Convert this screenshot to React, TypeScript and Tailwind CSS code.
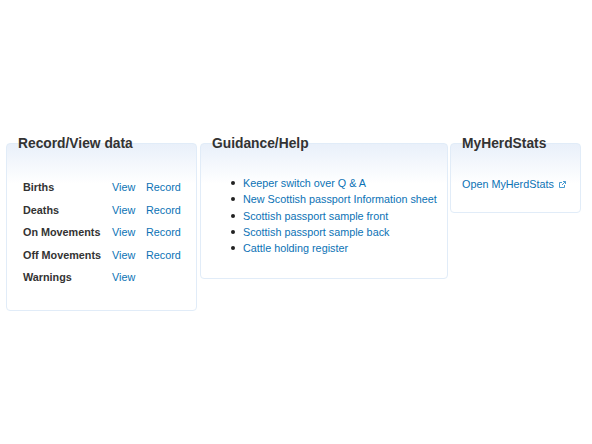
const rows = [
  { label: 'Births', record: true },
  { label: 'Deaths', record: true },
  { label: 'On Movements', record: true },
  { label: 'Off Movements', record: true },
  { label: 'Warnings', record: false },
];

const guides = [
  'Keeper switch over Q & A',
  'New Scottish passport Information sheet',
  'Scottish passport sample front',
  'Scottish passport sample back',
  'Cattle holding register',
];

function Panel({ title, className, children }: { title: string; className: string; children: React.ReactNode }) {
  return (
    <div className={className}>
      <h2 className="mb-[-10px] ml-3 relative text-[13.8px] leading-[18px] font-bold text-[#333]">
        {title}
      </h2>
      <div className="rounded border border-[#e1ecf8] bg-[linear-gradient(#e9f0fa,#ffffff_40px)]">{children}</div>
    </div>
  );
}

export default function App() {
  return (
    <div className="w-[592px] h-[444px] bg-white font-['Liberation_Sans',Arial,sans-serif] text-[10.8px] pt-[135px] pl-[6px]">
      <div className="flex items-start">
        <Panel title="Record/View data" className="w-[191px] mr-[3px]">
          <div className="pt-[32px] pb-[21px] pl-[16px]">
            {rows.map((r) => (
              <div key={r.label} className="flex h-[22.5px] items-center">
                <span className="w-[89px] font-bold text-[#333]">{r.label}</span>
                <a className="w-[34px] text-[#0b72b5]">View</a>
                {r.record && <a className="text-[#0b72b5]">Record</a>}
              </div>
            ))}
          </div>
        </Panel>
        <Panel title="Guidance/Help" className="w-[248px] mr-[2px]">
          <ul className="pt-[31px] pb-[22px] pl-[30px] text-[#0b72b5]">
            {guides.map((g) => (
              <li key={g} className="flex h-[16.3px] items-center leading-[16px]">
                <span className="mr-[8px] size-[4px] rounded-full bg-[#222]" />
                <a>{g}</a>
              </li>
            ))}
          </ul>
        </Panel>
        <Panel title="MyHerdStats" className="w-[131px]">
          <div className="pt-[32px] pb-[20px] pl-[11px] flex items-center text-[#0b72b5] leading-[16px]">
            <a>Open MyHerdStats</a>
            <svg className="ml-[5px]" width="7" height="7" viewBox="0 0 7 7" fill="none" stroke="#4a9bd0" strokeWidth="1">
              <path d="M3 1.5H.5v5h5V4" />
              <path d="M3 4l3.5-3.5M4 .5h2.5V3" />
            </svg>
          </div>
        </Panel>
      </div>
    </div>
  );
}
